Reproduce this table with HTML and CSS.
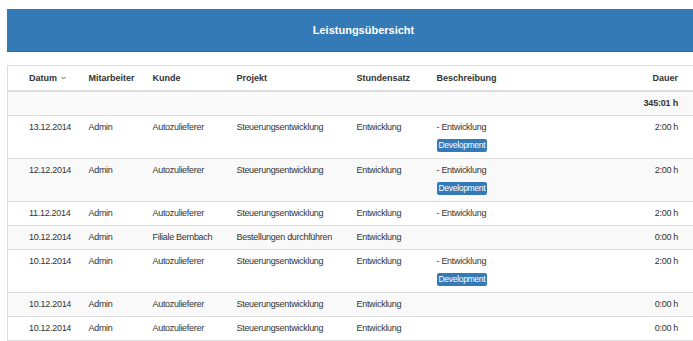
FILE: index.html
```html
<!DOCTYPE html>
<html lang="de">
<head>
<meta charset="utf-8">
<title>Leistungsübersicht</title>
<link rel="stylesheet" href="styles.css">
</head>
<body>
<div class="page">
  <div class="panel-heading">Leistungsübersicht</div>
  <table class="report">
    <colgroup>
      <col class="c-date"><col class="c-user"><col class="c-customer"><col class="c-project"><col class="c-rate"><col class="c-desc"><col class="c-dur">
    </colgroup>
    <thead>
      <tr>
        <th class="first">Datum <svg class="caret" width="5" height="4" viewBox="0 0 5 4"><path d="M0.5 1 L2.5 3 L4.5 1" fill="none" stroke="#555" stroke-width="0.9"/></svg></th>
        <th>Mitarbeiter</th>
        <th>Kunde</th>
        <th>Projekt</th>
        <th>Stundensatz</th>
        <th>Beschreibung</th>
        <th class="last">Dauer</th>
      </tr>
    </thead>
    <tbody>
      <tr class="total">
        <td class="first"></td><td></td><td></td><td></td><td></td><td></td>
        <td class="last">345:01 h</td>
      </tr>
      <tr>
        <td class="first">13.12.2014</td><td>Admin</td><td>Autozulieferer</td><td>Steuerungsentwicklung</td><td>Entwicklung</td>
        <td>- Entwicklung<div class="tags"><span class="badge">Development</span></div></td>
        <td class="last">2:00 h</td>
      </tr>
      <tr>
        <td class="first">12.12.2014</td><td>Admin</td><td>Autozulieferer</td><td>Steuerungsentwicklung</td><td>Entwicklung</td>
        <td>- Entwicklung<div class="tags"><span class="badge">Development</span></div></td>
        <td class="last">2:00 h</td>
      </tr>
      <tr>
        <td class="first">11.12.2014</td><td>Admin</td><td>Autozulieferer</td><td>Steuerungsentwicklung</td><td>Entwicklung</td>
        <td>- Entwicklung</td>
        <td class="last">2:00 h</td>
      </tr>
      <tr>
        <td class="first">10.12.2014</td><td>Admin</td><td>Filiale Bernbach</td><td>Bestellungen durchführen</td><td>Entwicklung</td>
        <td></td>
        <td class="last">0:00 h</td>
      </tr>
      <tr>
        <td class="first">10.12.2014</td><td>Admin</td><td>Autozulieferer</td><td>Steuerungsentwicklung</td><td>Entwicklung</td>
        <td>- Entwicklung<div class="tags"><span class="badge">Development</span></div></td>
        <td class="last">2:00 h</td>
      </tr>
      <tr>
        <td class="first">10.12.2014</td><td>Admin</td><td>Autozulieferer</td><td>Steuerungsentwicklung</td><td>Entwicklung</td>
        <td></td>
        <td class="last">0:00 h</td>
      </tr>
      <tr>
        <td class="first">10.12.2014</td><td>Admin</td><td>Autozulieferer</td><td>Steuerungsentwicklung</td><td>Entwicklung</td>
        <td></td>
        <td class="last">0:00 h</td>
      </tr>
    </tbody>
  </table>
</div>
</body>
</html>
```

FILE: styles.css
```css
html, body {
  margin: 0;
  padding: 0;
  background: #fff;
  overflow: hidden;
}

body {
  font-family: "Liberation Sans", Arial, Helvetica, sans-serif;
  color: #333;
}

.page {
  padding: 9px 0 0 7px;
}

.panel-heading {
  width: 713px;
  height: 42px;
  line-height: 42px;
  background: #337ab7;
  border-bottom: 1px solid #2e6da4;
  color: #fff;
  font-size: 11px;
  font-weight: bold;
  text-align: center;
}

.report {
  margin-top: 13px;
  width: 694px;
  border-collapse: collapse;
  table-layout: fixed;
  border: 1px solid #ddd;
  font-size: 9px;
}

.c-date { width: 76px; }
.c-user { width: 64px; }
.c-customer { width: 84px; }
.c-project { width: 120px; }
.c-rate { width: 80px; }
.c-desc { width: 150px; }
.c-dur { width: auto; }

.report th,
.report td {
  padding: 5px 5px;
  line-height: 13px;
  text-align: left;
  vertical-align: top;
  white-space: nowrap;
}

.report th {
  padding-top: 6px;
  font-weight: bold;
  border-bottom: 2px solid #ddd;
}

.report td {
  border-top: 1px solid #ddd;
  letter-spacing: -0.3px;
}

.report .first {
  padding-left: 21px;
}

.report .last {
  text-align: right;
  padding-right: 22px;
}

.report tbody tr:nth-child(odd) {
  background: #f9f9f9;
}

.report tr.total td {
  font-weight: bold;
  letter-spacing: -0.2px;
}

.caret {
  vertical-align: 1px;
  margin-left: 1px;
}

.tags {
  margin-top: 5px;
  margin-bottom: 1px;
  height: 13px;
}

.badge {
  display: inline-block;
  height: 13px;
  line-height: 13px;
  padding: 0 2px;
  background: #337ab7;
  color: #fff;
  font-size: 8.5px;
  border-radius: 2px;
}
```
